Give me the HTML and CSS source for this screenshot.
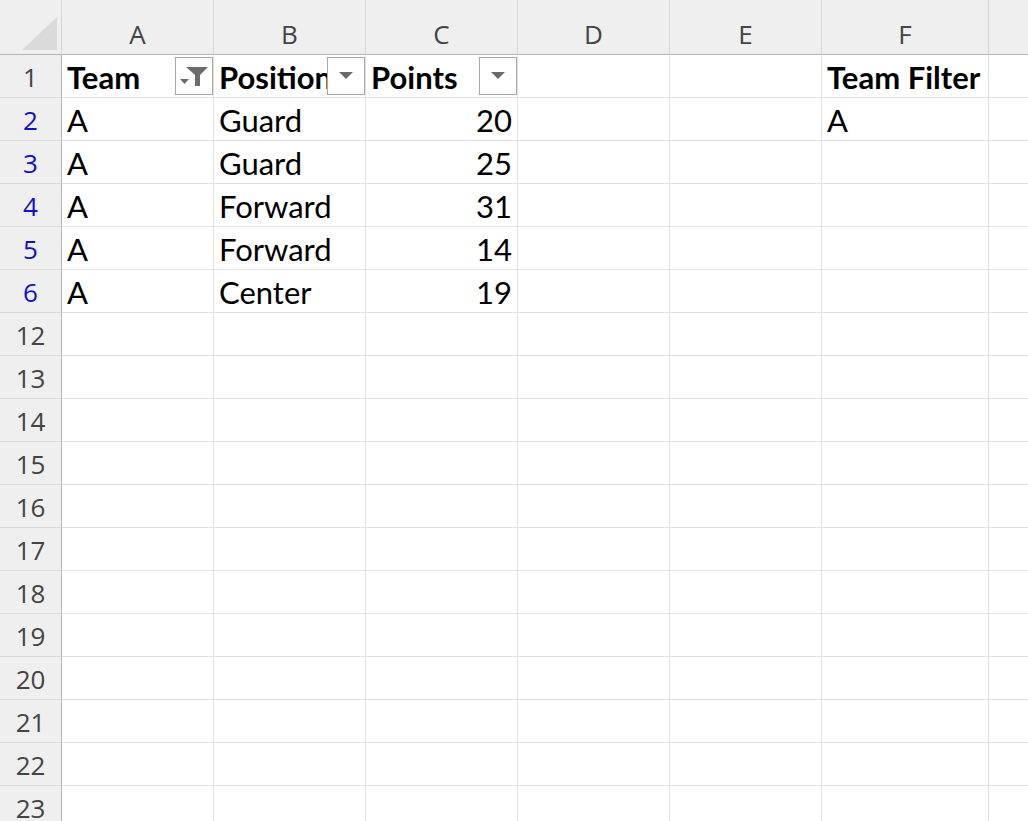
FILE: index.html
```html
<!DOCTYPE html>
<html>
<head>
<meta charset="utf-8">
<link rel="stylesheet" href="styles.css">
</head>
<body>
<div class="sheet">
  <div class="corner hdr"><div class="tri"></div></div>
  <div class="colh hdr">A</div>
  <div class="colh hdr">B</div>
  <div class="colh hdr">C</div>
  <div class="colh hdr">D</div>
  <div class="colh hdr">E</div>
  <div class="colh hdr">F</div>
  <div class="colh hdr last"></div>

  <div class="rowh">1</div>
  <div class="cell b">Team<span class="fbtn"><svg width="28" height="19" viewBox="0 0 28 19"><path d="M6 0h22l-8 8v11h-5V8z" fill="#6b6b6b"/><path d="M0 12h9l-4.5 5z" fill="#6b6b6b"/></svg></span></div>
  <div class="cell b clip">Position<span class="fbtn"><svg width="16" height="8" viewBox="0 0 16 8"><path d="M1 0h14l-7 7z" fill="#6b6b6b"/></svg></span></div>
  <div class="cell b">Points<span class="fbtn"><svg width="16" height="8" viewBox="0 0 16 8"><path d="M1 0h14l-7 7z" fill="#6b6b6b"/></svg></span></div>
  <div class="cell"></div>
  <div class="cell"></div>
  <div class="cell b">Team Filter</div>
  <div class="cell last"></div>

  <div class="rowh blue">2</div>
  <div class="cell">A</div><div class="cell">Guard</div><div class="cell num">20</div><div class="cell"></div><div class="cell"></div><div class="cell">A</div><div class="cell last"></div>
  <div class="rowh blue">3</div>
  <div class="cell">A</div><div class="cell">Guard</div><div class="cell num">25</div><div class="cell"></div><div class="cell"></div><div class="cell"></div><div class="cell last"></div>
  <div class="rowh blue">4</div>
  <div class="cell">A</div><div class="cell">Forward</div><div class="cell num">31</div><div class="cell"></div><div class="cell"></div><div class="cell"></div><div class="cell last"></div>
  <div class="rowh blue">5</div>
  <div class="cell">A</div><div class="cell">Forward</div><div class="cell num">14</div><div class="cell"></div><div class="cell"></div><div class="cell"></div><div class="cell last"></div>
  <div class="rowh blue">6</div>
  <div class="cell">A</div><div class="cell">Center</div><div class="cell num">19</div><div class="cell"></div><div class="cell"></div><div class="cell"></div><div class="cell last"></div>

  <div class="rowh">12</div><div class="cell"></div><div class="cell"></div><div class="cell"></div><div class="cell"></div><div class="cell"></div><div class="cell"></div><div class="cell last"></div>
  <div class="rowh">13</div><div class="cell"></div><div class="cell"></div><div class="cell"></div><div class="cell"></div><div class="cell"></div><div class="cell"></div><div class="cell last"></div>
  <div class="rowh">14</div><div class="cell"></div><div class="cell"></div><div class="cell"></div><div class="cell"></div><div class="cell"></div><div class="cell"></div><div class="cell last"></div>
  <div class="rowh">15</div><div class="cell"></div><div class="cell"></div><div class="cell"></div><div class="cell"></div><div class="cell"></div><div class="cell"></div><div class="cell last"></div>
  <div class="rowh">16</div><div class="cell"></div><div class="cell"></div><div class="cell"></div><div class="cell"></div><div class="cell"></div><div class="cell"></div><div class="cell last"></div>
  <div class="rowh">17</div><div class="cell"></div><div class="cell"></div><div class="cell"></div><div class="cell"></div><div class="cell"></div><div class="cell"></div><div class="cell last"></div>
  <div class="rowh">18</div><div class="cell"></div><div class="cell"></div><div class="cell"></div><div class="cell"></div><div class="cell"></div><div class="cell"></div><div class="cell last"></div>
  <div class="rowh">19</div><div class="cell"></div><div class="cell"></div><div class="cell"></div><div class="cell"></div><div class="cell"></div><div class="cell"></div><div class="cell last"></div>
  <div class="rowh">20</div><div class="cell"></div><div class="cell"></div><div class="cell"></div><div class="cell"></div><div class="cell"></div><div class="cell"></div><div class="cell last"></div>
  <div class="rowh">21</div><div class="cell"></div><div class="cell"></div><div class="cell"></div><div class="cell"></div><div class="cell"></div><div class="cell"></div><div class="cell last"></div>
  <div class="rowh">22</div><div class="cell"></div><div class="cell"></div><div class="cell"></div><div class="cell"></div><div class="cell"></div><div class="cell"></div><div class="cell last"></div>
  <div class="rowh">23</div><div class="cell"></div><div class="cell"></div><div class="cell"></div><div class="cell"></div><div class="cell"></div><div class="cell"></div><div class="cell last"></div>
</div>
</body>
</html>
```
FILE: styles.css
```css
html, body {
  margin: 0;
  padding: 0;
  background: #ffffff;
  overflow: hidden;
}
.sheet {
  display: grid;
  grid-template-columns: 62px 152px 152px 152px 152px 152px 167px 60px;
  grid-template-rows: 55px repeat(18, 43px);
  width: 1028px;
  height: 821px;
  overflow: hidden;
}
.hdr {
  background: #efefef;
  border-bottom: 1px solid #b5b5b5;
  box-sizing: border-box;
}
.corner {
  position: relative;
  border-right: 1px solid #d4d4d4;
}
.tri {
  position: absolute;
  right: 4px;
  bottom: 4px;
  width: 0;
  height: 0;
  border-left: 35px solid transparent;
  border-bottom: 33px solid #dadada;
}
.colh {
  border-right: 1px solid #d4d4d4;
  font-family: "Open Sans", "Noto Sans", sans-serif;
  font-size: 26px;
  color: #444444;
  display: flex;
  align-items: center;
  justify-content: center;
  padding-top: 14px;
}
.colh.last {
  border-right: none;
}
.rowh {
  background: #efefef;
  border-right: 1px solid #b5b5b5;
  border-bottom: 1px solid #dadada;
  box-sizing: border-box;
  font-family: "Open Sans", "Noto Sans", sans-serif;
  font-size: 26px;
  color: #444444;
  display: flex;
  align-items: center;
  justify-content: center;
  padding-top: 2px;
}
.rowh.blue {
  color: #1010c8;
}
.cell {
  position: relative;
  border-right: 1px solid #e1e1e1;
  border-bottom: 1px solid #e1e1e1;
  box-sizing: border-box;
  font-family: Lato, "Liberation Sans", sans-serif;
  font-size: 31px;
  color: #000000;
  display: flex;
  align-items: center;
  padding: 2px 5px 0 5px;
  white-space: nowrap;
}
.cell.last {
  border-right: none;
}
.cell.b {
  font-weight: bold;
}
.cell.clip {
  overflow: hidden;
}
.cell.num {
  justify-content: flex-end;
}
.fbtn {
  position: absolute;
  right: 0;
  top: 2px;
  width: 38px;
  height: 38px;
  box-sizing: border-box;
  border: 1px solid #a8a8a8;
  background: #ffffff;
  display: flex;
  align-items: center;
  justify-content: center;
}
```
